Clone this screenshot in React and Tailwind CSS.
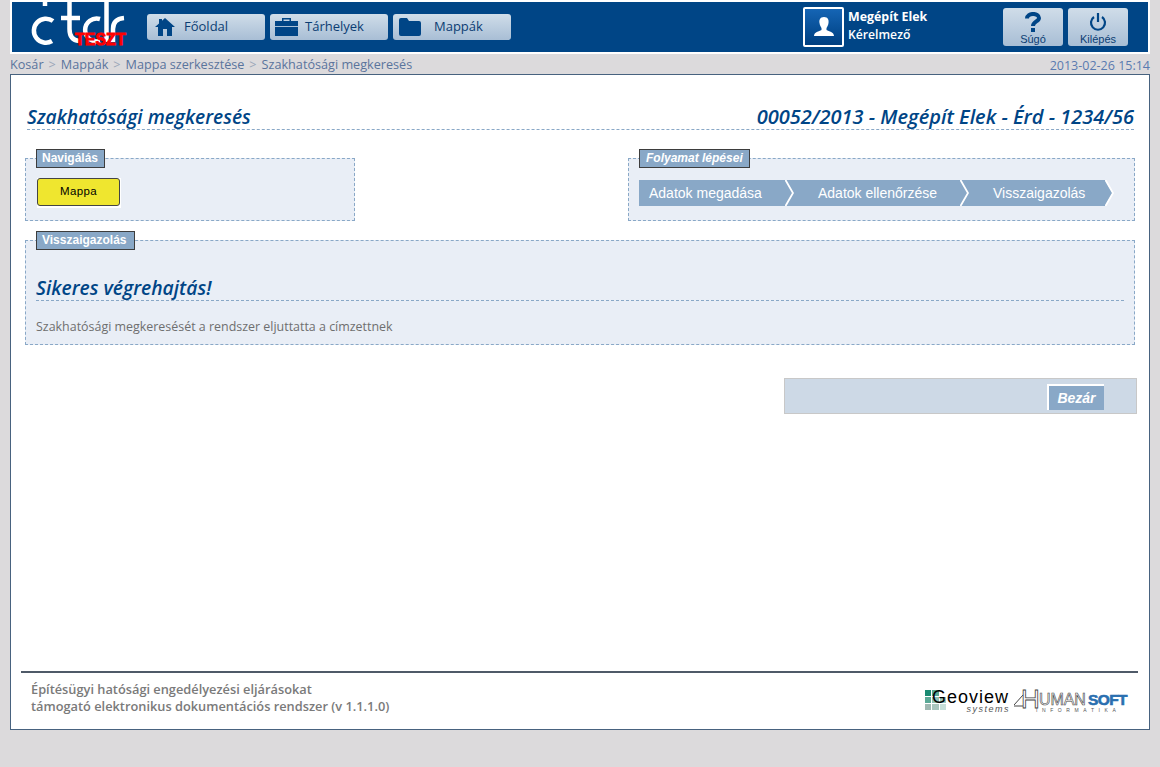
import React from "react";

const ui = "font-['Open_Sans','Noto_Sans',sans-serif]";

function Home() {
  return (
    <svg width="20" height="18" viewBox="0 0 20 18" fill="#004586">
      <path d="M10 0 L20 9 L17 9 L17 18 L12 18 L12 11 L8 11 L8 18 L3 18 L3 9 L0 9 L4 5.4 L4 1 L7 1 L7 2.7 Z" />
    </svg>
  );
}
function Case() {
  return (
    <svg width="23" height="18" viewBox="0 0 23 18" fill="#004586">
      <path d="M7 3 V0 H16 V3 H14.5 V1.5 H8.5 V3 Z" />
      <rect x="0" y="3" width="23" height="15" />
      <rect x="0" y="8" width="23" height="1" fill="#a9bfd5" />
    </svg>
  );
}
function Folder() {
  return (
    <svg width="22" height="18" viewBox="0 0 22 18" fill="#004586">
      <path d="M0 2 Q0 0 2 0 H8 L10 3 H20 Q22 3 22 5 V16 Q22 18 20 18 H2 Q0 18 0 16 Z" />
    </svg>
  );
}

function NavButton({ icon, label, iconClass, labelClass }) {
  return (
    <div className="relative w-[118px] h-[26px] rounded-[3px] bg-gradient-to-b from-[#d0dde9] to-[#a8bed5] flex items-center">
      <div className={`flex items-center ${iconClass}`}>{icon}</div>
      <span className={`text-[13px] text-[#0b3d73] ${labelClass}`}>{label}</span>
    </div>
  );
}

function BigButton({ icon, label }) {
  return (
    <div className="w-[60px] h-[38px] rounded-[3px] bg-gradient-to-b from-[#d0dde9] to-[#a8bed5] flex flex-col items-center pt-[4px]">
      <div className="h-[21px]">{icon}</div>
      <span className="text-[11px] leading-[12px] font-['Liberation_Sans',sans-serif] text-[#0b3d73]">{label}</span>
    </div>
  );
}

function Logo() {
  return (
    <div className="relative w-[135px] h-[50px] shrink-0 overflow-hidden">
      <svg width="135" height="50" viewBox="0 0 135 50" fill="none" stroke="#fff" strokeWidth="4.5">
        <path d="M41 19 A12 12 0 1 0 40 39" />
        <path d="M33 -2 V4" />
        <path d="M57.5 -2 V27 Q57.5 38 67 39 M49 16 H68" />
        <path d="M88 17 A11.5 11.5 0 1 0 88 39" />
        <path d="M94.5 -2 V40" />
        <path d="M101 40 V27 Q101 17 112 16" />
      </svg>
      <span className="absolute left-[63px] top-[29px] text-[16px] leading-[17px] font-bold tracking-[0px] text-[#f00] font-['Liberation_Sans',sans-serif] [-webkit-text-stroke:1px_#f00]">TESZT</span>
    </div>
  );
}

function Legend({ children, className = "", italic }) {
  return (
    <div className={`absolute left-[10px] top-[-10px] h-[19px] border border-[#3d3d3d] bg-[#89a8c7] text-[12px] leading-[16px] font-bold text-white font-['Liberation_Sans',sans-serif] ${italic ? "italic" : ""} ${className}`}>
      {children}
    </div>
  );
}

function Step({ label, width, textClass }) {
  return (
    <div className={`relative h-[26px] bg-[#89a8c7] flex items-center ${width}`}>
      <span className={`text-[14px] text-white font-['Liberation_Sans',sans-serif] ${textClass}`}>{label}</span>
    </div>
  );
}

function Chevron() {
  return (
    <svg className="absolute left-full top-0 z-10" width="9" height="26" viewBox="0 0 9 26" fill="none">
      <path d="M0 0 L7.5 13 L0 26 Z" fill="#89a8c7" />
      <path d="M0.5 0 L8 13 L0.5 26" stroke="#fff" strokeWidth="1.8" />
    </svg>
  );
}

export default function App() {
  return (
    <div className={`w-[1160px] h-[767px] bg-[#dcdadc] overflow-hidden px-[10px] ${ui}`}>
      {/* header */}
      <header className="h-[54px] bg-white px-[2px] pt-[2px]">
        <div className="h-[50px] bg-[#004586] flex items-start">
          <Logo />
          <nav className="flex gap-[5px] pt-[12px]">
            <NavButton icon={<Home />} label="Főoldal" iconClass="pl-[8px] pr-[6px]" labelClass="pl-[3px]" />
            <NavButton icon={<Case />} label="Tárhelyek" iconClass="pl-[5px] pr-[7px]" />
            <NavButton icon={<Folder />} label="Mappák" iconClass="pl-[6px] pr-[13px]" />
          </nav>
          <div className="ml-[292px] pt-[5px] flex gap-[4px]">
            <div className="w-[41px] h-[40px] border-2 border-white rounded-[2px] bg-gradient-to-b from-[#1565b5] to-[#003f80] flex items-center justify-center">
              <svg width="24" height="24" viewBox="0 0 24 24" fill="#fff">
                <path d="M12 2 C16 2 17 5 16.5 8 C16.2 10.5 15 12 14.5 13 V15 C17 16.5 22 17 22 21 H2 C2 17 7 16.5 9.5 15 V13 C9 12 7.8 10.5 7.5 8 C7 5 8 2 12 2 Z" />
              </svg>
            </div>
            <div className="text-white text-[12.2px] leading-[18px] pt-[1px] font-semibold">
              <div className="font-bold text-[12.4px]">Megépít Elek</div>
              <div>Kérelmező</div>
            </div>
          </div>
          <div className="ml-auto mr-[20px] pt-[6px] flex gap-[5px]">
            <BigButton
              label="Súgó"
              icon={
                <svg width="16" height="20" viewBox="0 0 16 20" fill="none" stroke="#004586" strokeWidth="4">
                  <path d="M2 6.5 C2 0.5 14 0.5 14 6 C14 9.5 8 9.5 8 14" />
                  <rect x="6" y="16" width="4" height="4" fill="#004586" stroke="none" />
                </svg>
              }
            />
            <BigButton
              label="Kilépés"
              icon={
                <svg width="18" height="20" viewBox="0 0 18 20" fill="none" stroke="#004586" strokeWidth="2.2">
                  <path d="M5 5 A7 7 0 1 0 13 5 M9 1 V10" />
                </svg>
              }
            />
          </div>
        </div>
      </header>

      {/* breadcrumb */}
      <div className="h-[20px] flex items-start justify-between text-[12.65px] leading-[18px] pt-[1px]">
        <div className="text-[#5a749c] flex gap-[5px]">
          <span>Kosár</span><span className="text-[#9aa6b8]">&gt;</span>
          <span>Mappák</span><span className="text-[#9aa6b8]">&gt;</span>
          <span>Mappa szerkesztése</span><span className="text-[#9aa6b8]">&gt;</span>
          <span>Szakhatósági megkeresés</span>
        </div>
        <div className="text-[#5a7ab0] pt-[2px] text-[12.5px] leading-[18px]">2013-02-26 15:14</div>
      </div>

      {/* content */}
      <main className="h-[656px] border border-[#47627f] bg-white flex flex-col">
        <div className="pl-[14px] pr-[14px]">
          <div className="mt-[30px] ml-[2px] mr-[1px] h-[25px] flex justify-between items-baseline border-b border-dashed border-[#89a8c7] leading-[24px] italic font-semibold text-[#004586]">
            <span className="text-[19.2px]">Szakhatósági megkeresés</span>
            <span className="text-[20px]">00052/2013 - Megépít Elek - Érd - 1234/56</span>
          </div>

          <div className="mt-[28px] flex justify-between">
            <section className="relative w-[330px] h-[63px] border border-dashed border-[#89a8c7] bg-[#e9eef6]">
              <Legend className="pl-[5px] pr-[6px]">Navigálás</Legend>
              <div className="pl-[11px] pt-[19px]">
                <div className="w-[84px] h-[30px] bg-white pr-[1px] pb-[2px]">
                  <div className="w-[83px] h-[28px] rounded-[3px] border border-[#444] bg-[#efe62f] flex items-center justify-center text-[11.5px] tracking-[0.4px] text-black font-['Liberation_Sans',sans-serif]">Mappa</div>
                </div>
              </div>
            </section>
            <section className="relative w-[507px] h-[63px] border border-dashed border-[#89a8c7] bg-[#e9eef6]">
              <Legend italic className="pl-[6px] pr-[6px]">Folyamat lépései</Legend>
              <div className="pl-[10px] pt-[21px] flex">
                <div className="relative">
                  <Step label="Adatok megadása" width="w-[146px]" textClass="pl-[10px]" />
                  <Chevron />
                </div>
                <div className="relative">
                  <Step label="Adatok ellenőrzése" width="w-[175px]" textClass="pl-[33px]" />
                  <Chevron />
                </div>
                <div className="relative">
                  <Step label="Visszaigazolás" width="w-[145px]" textClass="pl-[33px]" />
                  <Chevron />
                </div>
              </div>
            </section>
          </div>

          <section className="relative mt-[19px] h-[105px] border border-dashed border-[#89a8c7] bg-[#e9eef6] px-[10px]">
            <Legend className="pl-[5px] pr-[6px] w-[99px]">Visszaigazolás</Legend>
            <div className="mt-[35px] h-[25px] border-b border-dashed border-[#89a8c7] text-[19.3px] leading-[24px] italic font-semibold text-[#004586]">Sikeres végrehajtás!</div>
            <p className="mt-[16px] text-[12.45px] leading-[20px] text-[#6f6f6f]">Szakhatósági megkeresését a rendszer eljuttatta a címzettnek</p>
          </section>

          <div className="mt-[33px] ml-[759px] mr-[-2px] h-[36px] border border-[#c8c8c8] bg-[#cdd9e6] pl-[262px] pt-[5px]">
            <div className="w-[57px] h-[26px] border-l-2 border-t-2 border-white bg-[#89a8c7] flex items-center justify-center text-[14px] italic font-bold text-white font-['Liberation_Sans',sans-serif]">Bezár</div>
          </div>
        </div>

        <footer className="mt-auto mx-[10px] mr-[11px] h-[58px] border-t-2 border-[#4f5a68] flex justify-between">
          <div className="pl-[10px] pt-[8px] text-[12.8px] leading-[17px] font-semibold text-[#7a7a7a]">
            <div>Építésügyi hatósági engedélyezési eljárásokat</div>
            <div>támogató elektronikus dokumentációs rendszer (v 1.1.1.0)</div>
          </div>
          <div className="flex items-start pt-[17px] pr-[8px] gap-[4px]">
            <div className="relative w-[85px] h-[24px]">
              <div className="grid grid-cols-3 gap-[1px] w-[21px] absolute left-0 top-0">
                <span className="h-[6px] bg-[#1a8a72]" /><span className="h-[6px] bg-[#5aa996]" /><span className="h-[6px] bg-transparent" />
                <span className="h-[6px] bg-[#5aa996]" /><span className="h-[6px] bg-[#8fbfb4]" /><span className="h-[6px] bg-[#9ccabf]" />
                <span className="h-[6px] bg-[#9fb8b2]" /><span className="h-[6px] bg-[#a9c5be]" /><span className="h-[6px] bg-[#c6dfd9]" />
              </div>
              <span className="absolute left-[7px] top-0 text-[18px] leading-[15px] tracking-[1px] text-black font-['Liberation_Sans',sans-serif]">Geoview</span>
              <span className="absolute right-0 top-[15px] text-[9px] leading-[9px] italic tracking-[1.5px] text-[#555] font-['Liberation_Sans',sans-serif]">systems</span>
            </div>
            <div className="relative w-[116px] h-[24px] -mt-[2px]">
              <svg className="absolute left-0 top-0" width="20" height="24" viewBox="0 0 20 24" fill="none" stroke="#444" strokeWidth="1">
                <path d="M0 17 L9 7 H12 M0 18 H9" />
              </svg>
              <span className="absolute left-[7px] top-[-2px] text-[26px] leading-[26px] text-white [-webkit-text-stroke:0.8px_#444] font-['Liberation_Sans',sans-serif]">H</span>
              <span className="absolute left-[25px] top-[4px] text-[16px] leading-[15px] tracking-[-0.1px] text-white [-webkit-text-stroke:0.6px_#444] font-['Liberation_Sans',sans-serif]">UMAN</span>
              <span className="absolute left-[74px] top-[4px] text-[15.5px] leading-[15px] font-bold tracking-[-0.6px] text-[#2a6fb0] [-webkit-text-stroke:0.6px_#2a6fb0] font-['Liberation_Sans',sans-serif]">SOFT</span>
              <span className="absolute left-[22px] top-[19px] text-[5px] leading-[6px] tracking-[4.6px] text-[#555] font-['Liberation_Sans',sans-serif]">INFORMATIKA</span>
            </div>
          </div>
        </footer>
      </main>
    </div>
  );
}
